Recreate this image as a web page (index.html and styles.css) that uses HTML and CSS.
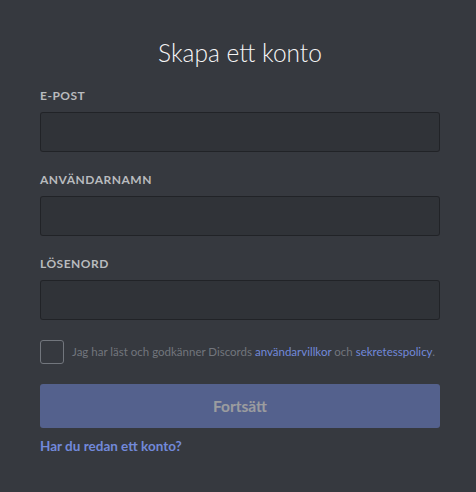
FILE: index.html
```html
<!DOCTYPE html>
<html lang="sv">
<head>
    <meta charset="UTF-8" />
    <meta name="viewport" content="width=device-width, initial-scale=1.0" />
    <title>Skapa ett konto</title>
    <link rel="stylesheet" href="styles.css">
</head>
<body>
<form class="register">
    <h1 class="title">Skapa ett konto</h1>

    <label class="field">
        <span class="field-label">E-post</span>
        <input class="field-input" type="email" />
    </label>

    <label class="field">
        <span class="field-label">Användarnamn</span>
        <input class="field-input" type="text" />
    </label>

    <label class="field">
        <span class="field-label">Lösenord</span>
        <input class="field-input" type="password" />
    </label>

    <div class="terms">
        <span class="checkbox"></span>
        <span class="terms-text">Jag har läst och godkänner Discords <a href="#">användarvillkor</a> och <a href="#">sekretesspolicy</a>.</span>
    </div>

    <button class="submit" type="button" disabled>Fortsätt</button>

    <a href="#" class="login-link">Har du redan ett konto?</a>
</form>
</body>
</html>
```

FILE: styles.css
```css
html, body {
  margin: 0;
  height: 100%;
}
body {
  background: #36393f;
  font-family: Lato, "Open Sans", sans-serif;
  color: #fff;
}
.register {
  display: flex;
  flex-direction: column;
  padding: 38px 36px 0 40px;
}
.title {
  margin: 0 0 20px;
  font-size: 24.5px;
  line-height: 30px;
  font-weight: 300;
  text-align: center;
  color: #f6f6f7;
}
.field {
  display: flex;
  flex-direction: column;
  margin-bottom: 20px;
}
.field-label {
  font-size: 12px;
  line-height: 16px;
  font-weight: 700;
  text-transform: uppercase;
  letter-spacing: 0.5px;
  color: #b9bbbe;
  margin-bottom: 8px;
}
.field-input {
  box-sizing: border-box;
  height: 40px;
  width: 400px;
  background: rgba(0, 0, 0, 0.1);
  border: 1px solid rgba(0, 0, 0, 0.3);
  border-radius: 3px;
  outline: none;
}
.terms {
  display: flex;
  align-items: center;
  gap: 8px;
}
.checkbox {
  box-sizing: border-box;
  width: 24px;
  height: 24px;
  border: 1px solid #72767d;
  border-radius: 3px;
  flex: none;
}
.terms-text {
  font-size: 11.5px;
  line-height: 16px;
  color: #72767d;
  white-space: nowrap;
}
.terms-text a {
  color: #7289da;
  text-decoration: none;
}
.submit {
  margin-top: 20px;
  width: 400px;
  height: 44px;
  border: none;
  border-radius: 3px;
  background: #7289da;
  color: #fff;
  opacity: 0.5;
  font-family: inherit;
  font-size: 15.5px;
  font-weight: 700;
}
.login-link {
  margin-top: 10px;
  align-self: flex-start;
  font-size: 13.5px;
  line-height: 16px;
  font-weight: 700;
  color: #7289da;
  text-decoration: none;
}
```
